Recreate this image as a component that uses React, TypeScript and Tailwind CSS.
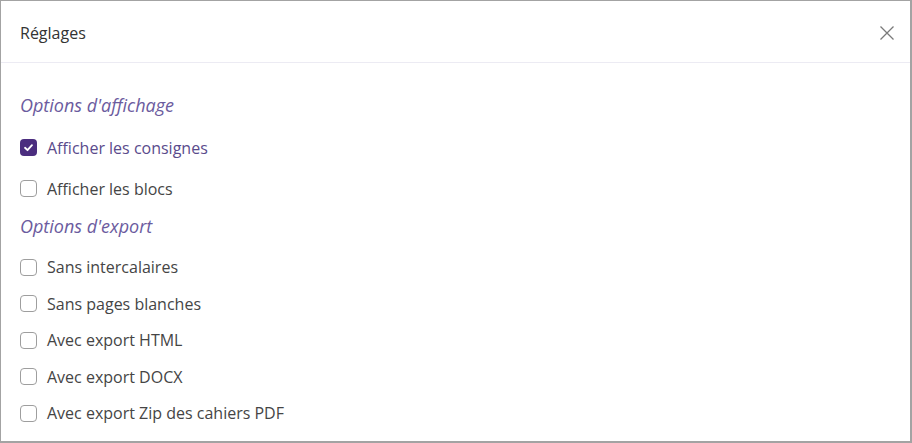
import React, { useState } from 'react';

interface OptionProps {
  label: string;
  checked: boolean;
  onToggle: () => void;
  className?: string;
}

const Option: React.FC<OptionProps> = ({ label, checked, onToggle, className }) => (
  <label className={`flex items-center gap-[10px] cursor-pointer select-none ${className ?? ''}`} onClick={onToggle}>
    {checked ? (
      <span className="flex h-[17px] w-[17px] items-center justify-center rounded-[4px] bg-[#4b2d7f]">
        <svg width="11" height="11" viewBox="0 0 12 12" fill="none">
          <path d="M2.2 6.3 L4.9 8.9 L9.8 3.4" stroke="#fff" strokeWidth="2" strokeLinecap="round" strokeLinejoin="round" />
        </svg>
      </span>
    ) : (
      <span className="h-[17px] w-[17px] rounded-[4px] border border-[#9e9e9e] bg-white" />
    )}
    <span className={checked ? 'text-[16px] text-[#5a4b8c]' : 'text-[16px] text-[#454545]'}>{label}</span>
  </label>
);

const SectionTitle: React.FC<{ children: React.ReactNode; className?: string }> = ({ children, className }) => (
  <h2 className={`flex items-center text-[18px] italic font-normal text-[#6b5b9e] ${className ?? ''}`}>{children}</h2>
);

export default function App() {
  const [opts, setOpts] = useState<Record<string, boolean>>({
    consignes: true,
    blocs: false,
    intercalaires: false,
    blanches: false,
    html: false,
    docx: false,
    zip: false
  });

  const toggle = (key: string) => setOpts(o => ({ ...o, [key]: !o[key] }));

  return (
    <div className="h-[443px] w-[912px] bg-white" style={{ fontFamily: '"Open Sans", sans-serif' }}>
      <div className="flex h-full flex-col border-t border-l border-r-2 border-b-2 border-[#a3a3a3]">
        {/* Header */}
        <div className="flex h-[62px] shrink-0 items-center justify-between border-b border-[#ecebf3] pl-[19px] pr-[11px] pt-[3px]">
          <span className="text-[16px] text-[#333]">Réglages</span>
          <button className="flex h-6 w-6 items-center justify-center text-[#7a7a7a]">
            <svg width="16" height="16" viewBox="0 0 16 16" fill="none">
              <path d="M1.5 1.5 L14.5 14.5 M14.5 1.5 L1.5 14.5" stroke="currentColor" strokeWidth="1.3" />
            </svg>
          </button>
        </div>

        {/* Body */}
        <div className="flex flex-col px-[19px] pt-[22px]">
          <SectionTitle className="h-[40px]">Options d'affichage</SectionTitle>
          <div className="mt-[2px] flex flex-col">
            <Option className="h-[41px]" label="Afficher les consignes" checked={opts.consignes} onToggle={() => toggle('consignes')} />
            <Option className="h-[41px]" label="Afficher les blocs" checked={opts.blocs} onToggle={() => toggle('blocs')} />
          </div>

          <SectionTitle className="h-[34px]">Options d'export</SectionTitle>
          <div className="mt-[6px] flex flex-col">
            <Option className="h-[36.5px]" label="Sans intercalaires" checked={opts.intercalaires} onToggle={() => toggle('intercalaires')} />
            <Option className="h-[36.5px]" label="Sans pages blanches" checked={opts.blanches} onToggle={() => toggle('blanches')} />
            <Option className="h-[36.5px]" label="Avec export HTML" checked={opts.html} onToggle={() => toggle('html')} />
            <Option className="h-[36.5px]" label="Avec export DOCX" checked={opts.docx} onToggle={() => toggle('docx')} />
            <Option className="h-[36.5px]" label="Avec export Zip des cahiers PDF" checked={opts.zip} onToggle={() => toggle('zip')} />
          </div>
        </div>
      </div>
    </div>
  );
}
